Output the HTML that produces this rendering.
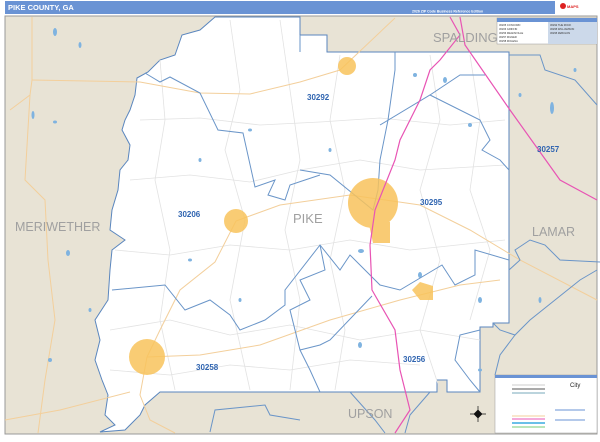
<!DOCTYPE html>
<html><head><meta charset="utf-8"><style>
body{margin:0;width:600px;height:437px;overflow:hidden;background:#fff;font-family:"Liberation Sans",sans-serif}
</style></head><body>
<svg width="600" height="437" viewBox="0 0 600 437" xmlns="http://www.w3.org/2000/svg" font-family="Liberation Sans, sans-serif">
<rect x="5" y="1" width="550" height="13" fill="#6a93d4"/>
<text x="8" y="10" font-size="7.5" font-weight="bold" fill="#fff">PIKE COUNTY, GA</text>
<text x="412" y="12.5" font-size="3.5" font-weight="bold" fill="#fff">2026 ZIP Code Business Reference Edition</text>
<rect x="558" y="1" width="40" height="13" fill="#fff"/>
<circle cx="563" cy="6" r="3" fill="#d22"/><text x="567" y="8" font-size="4" fill="#d22" font-weight="bold">MAPS</text>
<rect x="5" y="16" width="592" height="418" fill="#e8e3d5" stroke="#999" stroke-width="1"/>
<path d="M215,17 L300,17 L300,35 L327,35 L327,52 L509,52 L509,323 L493,323 L493,327 L480,327 L480,392 L447,392 L447,380 L437,380 L437,392 L160,392 L145,405 L140,415 L125,430 L100,432 L115,425 L105,415 L108,395 L102,380 L95,360 L100,340 L95,320 L108,300 L110,270 L112,250 L125,240 L110,230 L112,210 L118,190 L120,170 L128,160 L130,145 L122,130 L125,120 L130,110 L135,95 L137,78 L148,72 L160,60 L175,55 L182,35 L200,30 Z" fill="#fff" stroke="#5a86be" stroke-width="1"/>
<g fill="none" stroke="#e2e2e2" stroke-width="0.8">
<path d="M140,120 L200,118 L260,125 L320,122 L380,118 L450,125 L505,120"/>
<path d="M130,180 L190,175 L250,182 L300,170 L360,160 L420,170 L505,165"/>
<path d="M115,250 L170,255 L230,245 L290,250 L350,240 L410,250 L505,240"/>
<path d="M110,330 L170,320 L230,335 L290,325 L360,340 L420,330 L480,340"/>
<path d="M110,370 L170,375 L230,365 L290,370 L350,360 L420,365"/>
<path d="M160,60 L165,120 L155,180 L170,250 L160,320 L175,390"/>
<path d="M230,20 L240,90 L225,150 L245,220 L230,300 L250,390"/>
<path d="M280,20 L290,90 L300,160 L285,230 L300,300 L290,390"/>
<path d="M340,55 L330,120 L345,190 L330,260 L345,330 L335,390"/>
<path d="M430,55 L440,120 L420,190 L440,260 L420,330 L440,390"/>
<path d="M470,55 L480,120 L470,190 L490,250 L470,320"/>
</g>
<g fill="none" stroke="#f3cf9b" stroke-width="1">
<path d="M32,17 L32,80 L30,95 L10,110"/><path d="M30,95 L25,180 L45,200 L48,260 L55,320 L45,380 L38,433"/>
<path d="M32,80 L140,82 L200,93 L250,94 L300,82 L340,70 L395,18"/>
<path d="M236,221 L280,205 L350,195 L420,205 L470,230 L520,260 L597,300"/>
<path d="M236,221 L215,262 L180,290 L160,330 L147,357"/>
<path d="M147,357 L200,355 L260,345 L330,320 L400,300 L460,285 L500,280"/>
<path d="M5,420 L60,410 L130,392"/><path d="M147,357 L140,395 L150,420 L175,433"/>
</g>
<g fill="#7fb3e0">
<ellipse cx="55" cy="32" rx="2" ry="4"/><ellipse cx="80" cy="45" rx="1.5" ry="3"/><ellipse cx="33" cy="115" rx="1.5" ry="4"/><ellipse cx="55" cy="122" rx="2" ry="1.5"/><ellipse cx="68" cy="253" rx="2" ry="3"/><ellipse cx="90" cy="310" rx="1.5" ry="2"/><ellipse cx="50" cy="360" rx="2" ry="2"/><ellipse cx="552" cy="108" rx="2" ry="6"/><ellipse cx="540" cy="300" rx="1.5" ry="3"/><ellipse cx="415" cy="75" rx="2" ry="2"/><ellipse cx="445" cy="80" rx="2" ry="3"/><ellipse cx="420" cy="275" rx="2" ry="3"/><ellipse cx="361" cy="251" rx="3" ry="2"/><ellipse cx="480" cy="300" rx="2" ry="3"/><ellipse cx="360" cy="345" rx="2" ry="3"/><ellipse cx="250" cy="130" rx="2" ry="1.5"/><ellipse cx="200" cy="160" rx="1.5" ry="2"/><ellipse cx="470" cy="125" rx="2" ry="2"/><ellipse cx="330" cy="150" rx="1.5" ry="2"/><ellipse cx="190" cy="260" rx="2" ry="1.5"/><ellipse cx="480" cy="370" rx="2" ry="1.5"/><ellipse cx="240" cy="300" rx="1.5" ry="2"/><ellipse cx="520" cy="95" rx="1.5" ry="2"/><ellipse cx="575" cy="70" rx="1.5" ry="2"/></g>
<g fill="none" stroke="#6a95c8" stroke-width="1">
<path d="M145,73 L160,82 L170,77 L200,93 L218,130 L243,133 L255,187 L275,180 L268,195 L285,200 L290,185 L305,180 L320,175"/>
<path d="M300,35 L300,52"/><path d="M395,52 L395,70 L388,120 L380,160 L378,190 L373,210 L330,175 L300,170"/>
<path d="M380,125 L430,95 L480,120 L490,140 L482,150 L500,160 L509,170"/>
<path d="M430,95 L460,75 L485,75"/>
<path d="M509,55 L540,55 L545,70 L575,80 L597,105"/>
<path d="M112,290 L165,285 L185,310 L210,300 L230,315 L240,330 L265,320 L285,305 L285,290 L320,245 L340,270 L350,255 L380,285 L400,290 L442,265 L455,285 L475,275 L475,250 L509,260"/>
<path d="M320,245 L325,270 L300,280 L310,300 L290,310 L300,350 L320,345 L330,340 L372,296"/>
<path d="M300,350 L310,370 L320,392"/>
<path d="M480,330 L460,335 L455,360 L470,380 L480,392"/>
<path d="M509,270 L520,260 L515,250 L530,240 L545,245 L560,260 L600,262"/>
<path d="M493,323 L500,330 L515,335 L530,320 L555,300 L580,280 L597,270"/>
<path d="M515,335 L500,355 L495,375"/>
<path d="M430,392 L410,415 L405,433"/><path d="M350,392 L375,420 L385,433"/><path d="M210,432 L215,410 L265,405 L270,415 L300,420"/>
</g>
<g fill="#f8c35c" opacity="0.85">
<circle cx="347" cy="66" r="9"/><circle cx="236" cy="221" r="12"/><circle cx="373" cy="203" r="25"/>
<path d="M368,220 L390,222 L390,243 L373,243 Z"/><path d="M412,290 L420,282 L433,286 L433,300 L420,300 Z"/><circle cx="147" cy="357" r="18"/>
</g>
<g fill="none" stroke="#e854b4" stroke-width="1.2">
<path d="M450,17 L460,35 L440,60 L430,70 L420,100 L415,110 L400,140 L395,160 L385,185 L375,210 L370,245 L372,290 L395,330 L400,370 L410,410 L395,433"/>
<path d="M460,17 L465,45 L510,110 L560,180 L597,200"/>
</g>
<g fill="#a0a0a0" font-size="12.5">
<text x="15" y="231">MERIWETHER</text><text x="293" y="223" font-size="13">PIKE</text><text x="532" y="236">LAMAR</text><text x="433" y="42" font-size="13">SPALDING</text><text x="348" y="418">UPSON</text>
</g>
<g fill="#2f64b0" font-size="8" font-weight="bold">
<text x="307" y="100">30292</text><text x="178" y="217">30206</text><text x="420" y="205">30295</text><text x="537" y="152">30257</text><text x="196" y="370">30258</text><text x="403" y="362">30256</text>
</g>
<rect x="497" y="18" width="100" height="26" fill="#fff" stroke="#999" stroke-width="0.5"/>
<rect x="497" y="18" width="100" height="4" fill="#6a93d4"/>
<rect x="548" y="22" width="49" height="22" fill="#ccd9ea"/>
<g font-size="2.6" fill="#333"><text x="499" y="26">30205 CONCORD</text><text x="499" y="30">30206 GRIFFIN</text><text x="499" y="34">30256 MEANSVILLE</text><text x="499" y="38">30257 MILNER</text><text x="499" y="42">30258 MOLENA</text><text x="550" y="26">30292 THE ROCK</text><text x="550" y="30">30295 WILLIAMSON</text><text x="550" y="34">30295 ZEBULON</text></g>
<rect x="495" y="375" width="102" height="58" fill="#fff" stroke="#999" stroke-width="0.5"/>
<rect x="495" y="375" width="102" height="3" fill="#6a93d4"/>
<g stroke-width="1"><line x1="512" y1="385" x2="545" y2="385" stroke="#ccc"/><line x1="512" y1="389" x2="545" y2="389" stroke="#555"/><line x1="512" y1="393" x2="545" y2="393" stroke="#7ab"/><line x1="512" y1="416" x2="545" y2="416" stroke="#f3cf9b"/><line x1="512" y1="419" x2="545" y2="419" stroke="#e854b4"/><line x1="512" y1="423" x2="545" y2="423" stroke="#6ac0e8" stroke-width="2"/><line x1="512" y1="427" x2="545" y2="427" stroke="#7c7"/></g>
<text x="570" y="387" font-size="6" fill="#222">City</text>
<line x1="555" y1="410" x2="585" y2="410" stroke="#6a93d4"/><line x1="555" y1="420" x2="585" y2="420" stroke="#6a93d4"/>
<path d="M478,410 L482,414 L478,418 L474,414 Z M470,414 L486,414 M478,406 L478,422" stroke="#111" fill="#111" stroke-width="0.7"/>
</svg>
</body></html>
